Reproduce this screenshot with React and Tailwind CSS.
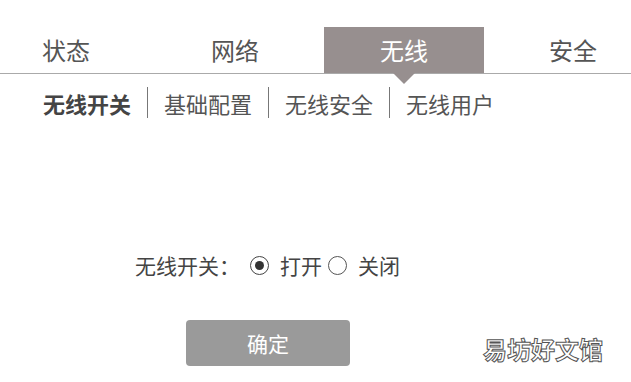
import React from "react";

export default function App() {
  const tabs = ["状态", "网络", "无线", "安全"];
  const subs = ["无线开关", "基础配置", "无线安全", "无线用户"];
  return (
    <div
      className="relative w-[631px] h-[382px] overflow-hidden bg-white text-[#555] font-['Noto_Sans_CJK_SC',sans-serif]"
    >
      <div className="pt-[27px]">
        <div className="flex h-[46px] ml-[-14px] gap-[9px]">
          {tabs.map((t, i) => (
            <div
              key={t}
              className={
                i === 2
                  ? "relative w-[160px] shrink-0 flex items-center justify-center text-[24px] leading-none bg-[#978f8f] text-white"
                  : "relative w-[160px] shrink-0 flex items-center justify-center text-[24px] leading-none text-[#555]"
              }
            >
              {t}
              {i === 2 && (
                <div className="absolute left-1/2 top-full -translate-x-1/2 w-0 h-0 border-l-[11px] border-r-[11px] border-t-[11px] border-l-transparent border-r-transparent border-t-[#978f8f]" />
              )}
            </div>
          ))}
        </div>
        <div className="h-px bg-[#aaa]" />
        <div className="flex items-center h-[31px] mt-[13px] pl-[43px] text-[22px] leading-none">
          {subs.map((s, i) => (
            <React.Fragment key={s}>
              {i > 0 && <div className="w-px h-[31px] bg-[#777] mx-[16px]" />}
              <span className={i === 0 ? "font-bold text-[#444]" : "text-[#555]"}>{s}</span>
            </React.Fragment>
          ))}
        </div>
        <div className="flex items-center h-[30px] mt-[132px] pl-[135px] text-[21px] leading-none text-[#444]">
          <span>无线开关：</span>
          <span className="ml-[10px] w-[19px] h-[19px] rounded-full border-[1.5px] border-[#444] flex items-center justify-center">
            <span className="w-[9px] h-[9px] rounded-full bg-[#333]" />
          </span>
          <span className="ml-[11px]">打开</span>
          <span className="ml-[6px] w-[19px] h-[19px] rounded-full border border-[#555]" />
          <span className="ml-[11px]">关闭</span>
        </div>
        <div className="mt-[40px] ml-[186px] w-[164px] h-[46px] rounded-[4px] bg-[#9a9a9a] flex items-center justify-center text-white text-[21px] leading-none">
          确定
        </div>
      </div>
      <div className="absolute left-[483px] top-[337px] text-[24px] leading-none text-white font-bold [-webkit-text-stroke:1px_#555]">
        易坊好文馆
      </div>
    </div>
  );
}
